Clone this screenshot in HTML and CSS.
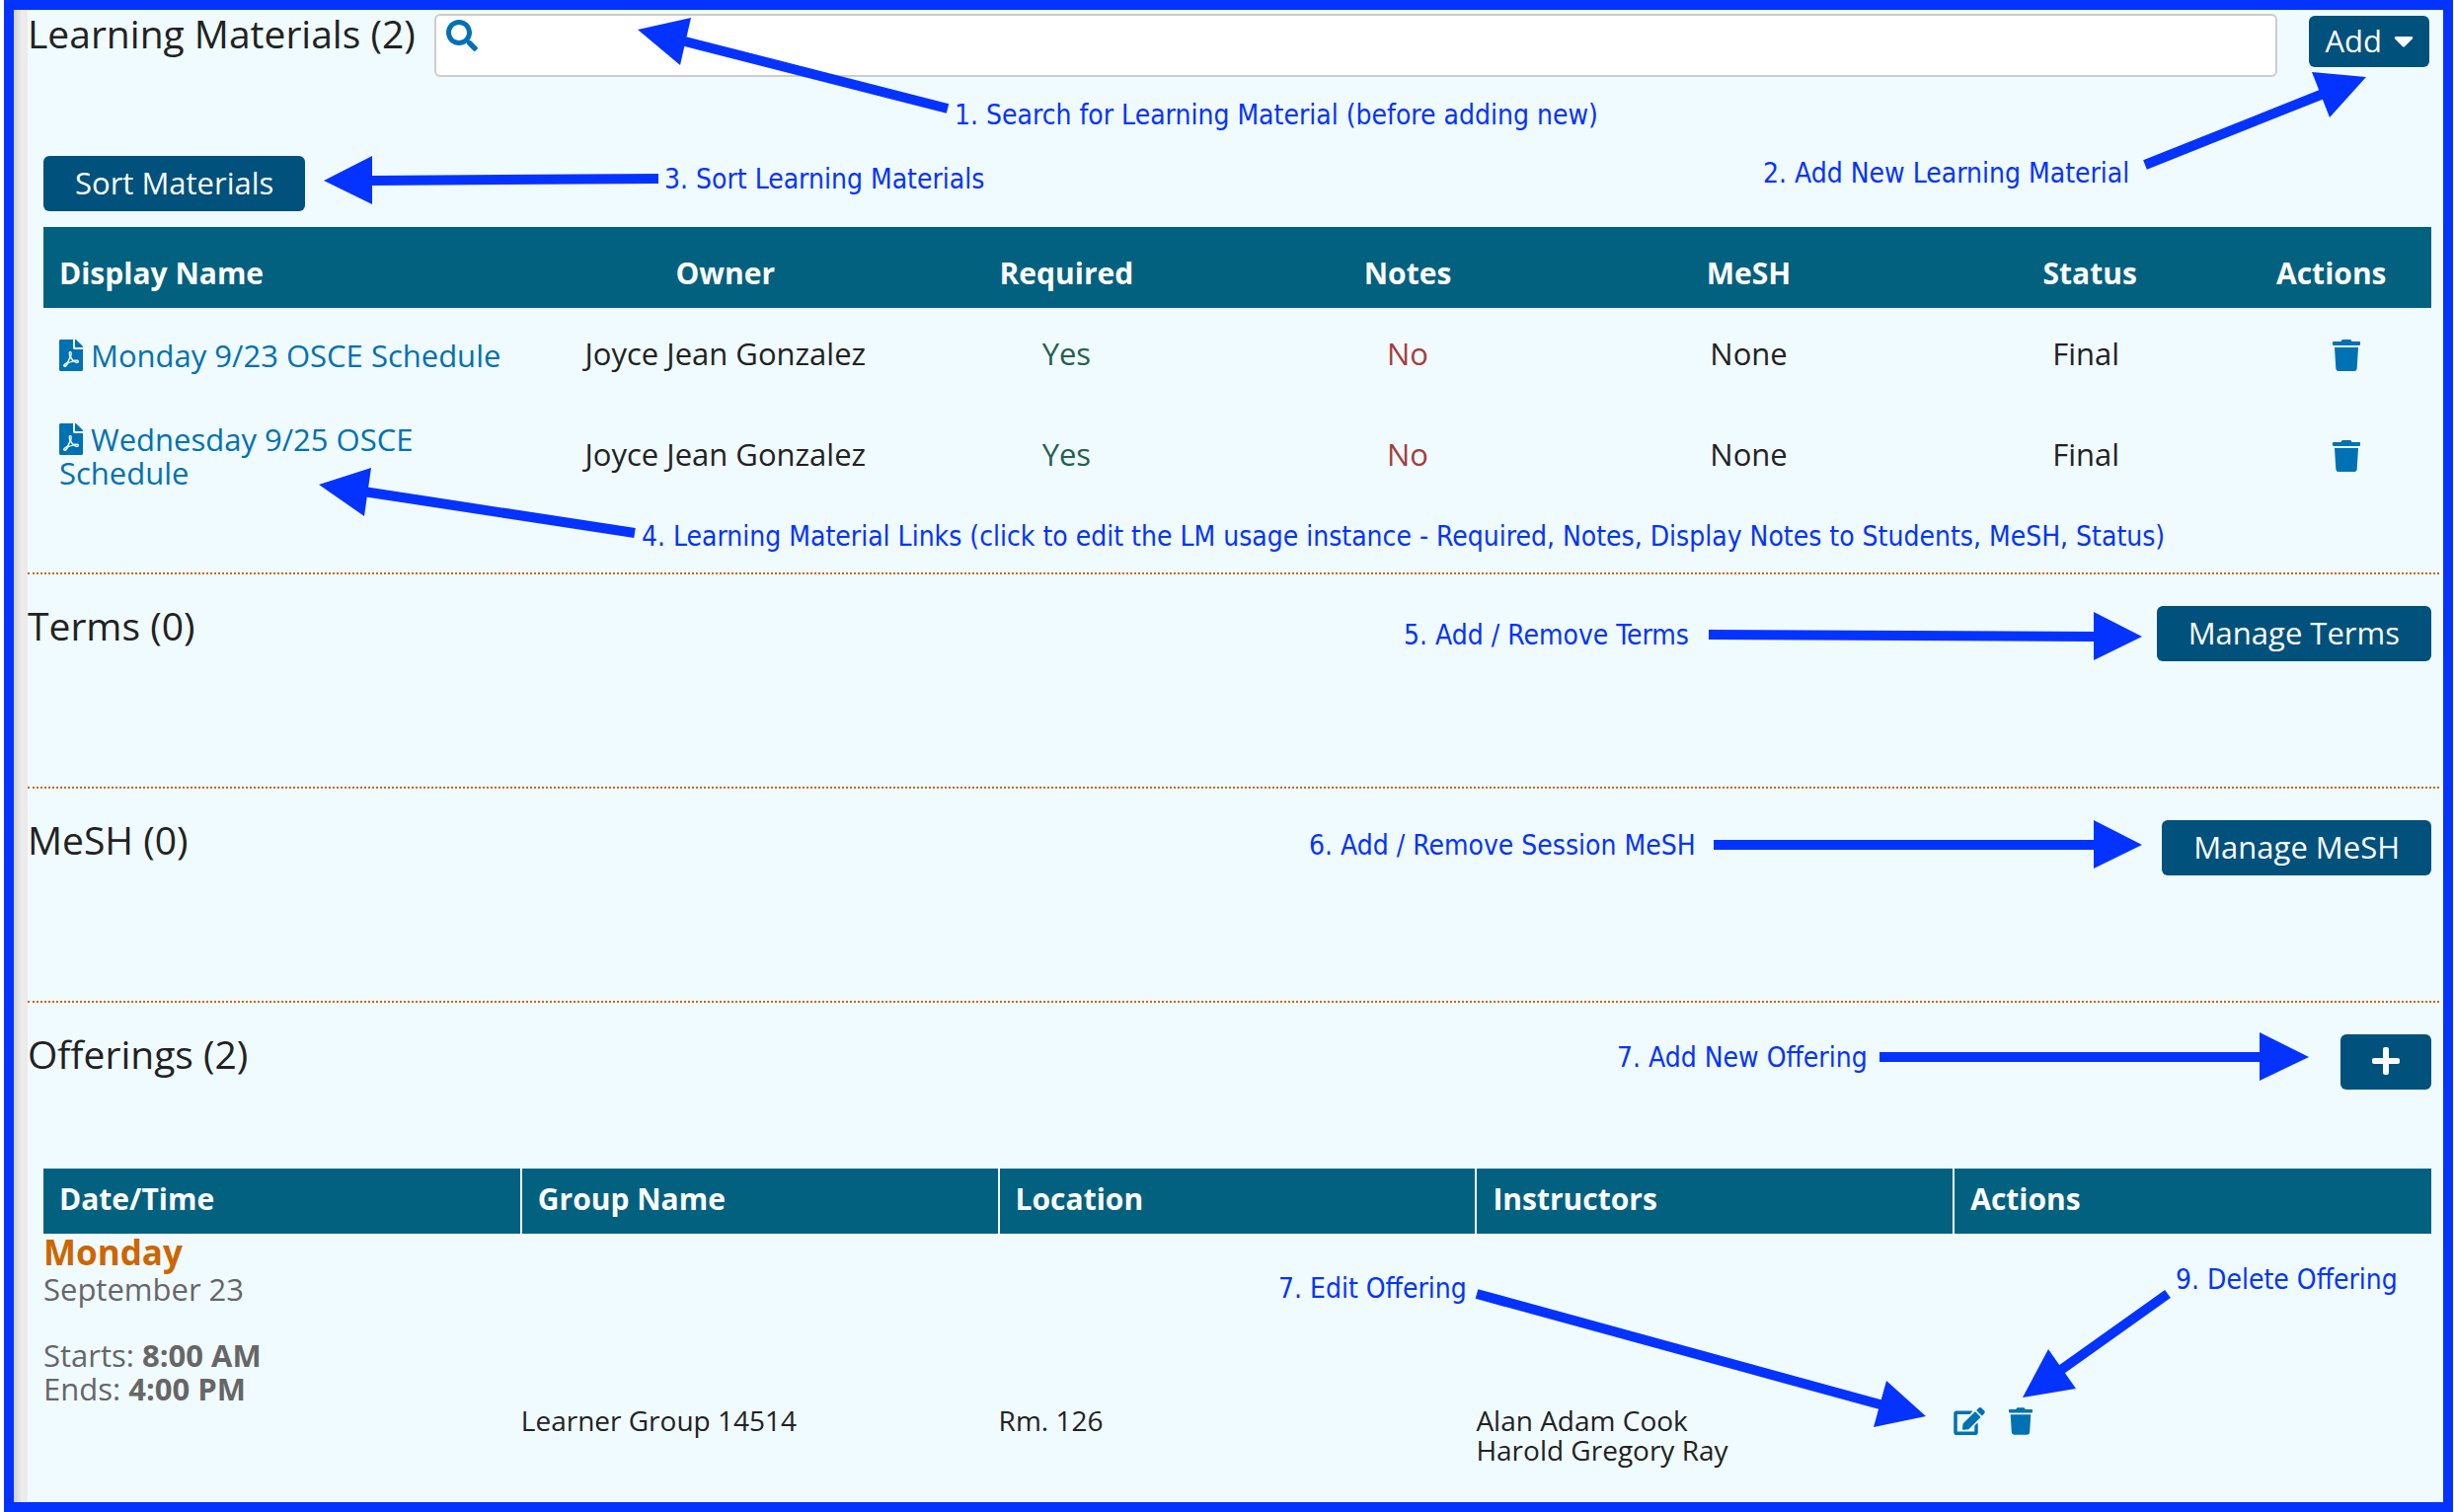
FILE: index.html
```html
<!DOCTYPE html>
<html lang="en">
<head>
<meta charset="utf-8">
<title>Session Details</title>
<link rel="stylesheet" href="styles.css">
</head>
<body>
<svg class="sprite" aria-hidden="true">
  <symbol id="i-search" viewBox="0 0 512 512"><path d="M505 442.7L405.3 343c-4.5-4.5-10.6-7-17-7H372c27.6-35.3 44-79.7 44-128C416 93.1 322.9 0 208 0S0 93.1 0 208s93.1 208 208 208c48.3 0 92.7-16.4 128-44v16.3c0 6.4 2.5 12.5 7 17l99.7 99.7c9.4 9.4 24.6 9.4 33.9 0l28.3-28.3c9.4-9.4 9.4-24.6.1-34zM208 336c-70.7 0-128-57.2-128-128 0-70.7 57.2-128 128-128 70.7 0 128 57.2 128 128 0 70.7-57.2 128-128 128z"/></symbol>
  <symbol id="i-trash" viewBox="0 0 448 512"><path d="M432 32H312l-9.4-18.7A24 24 0 0 0 281.1 0H166.8a23.72 23.72 0 0 0-21.4 13.3L136 32H16A16 16 0 0 0 0 48v32a16 16 0 0 0 16 16h416a16 16 0 0 0 16-16V48a16 16 0 0 0-16-16zM32 128l21.2 339a48 48 0 0 0 47.9 45h245.8a48 48 0 0 0 47.9-45L416 128z"/></symbol>
  <symbol id="i-edit" viewBox="0 0 576 512"><path d="M402.6 83.2l90.2 90.2c3.8 3.8 3.8 10 0 13.8L274.4 405.6l-92.8 10.3c-12.4 1.4-22.9-9.1-21.5-21.5l10.3-92.8L388.8 83.2c3.8-3.8 10-3.8 13.8 0zm162-22.9l-48.8-48.8c-15.2-15.2-39.9-15.2-55.2 0l-35.4 35.4c-3.8 3.8-3.8 10 0 13.8l90.2 90.2c3.8 3.8 10 3.8 13.8 0l35.4-35.4c15.2-15.3 15.2-40 0-55.2zM384 346.2V448H64V128h229.8c3.2 0 6.2-1.3 8.5-3.5l40-40c7.6-7.6 2.2-20.5-8.5-20.5H48C21.5 64 0 85.5 0 112v352c0 26.5 21.5 48 48 48h352c26.5 0 48-21.5 48-48V306.2c0-10.7-12.9-16-20.5-8.5l-40 40c-2.2 2.3-3.5 5.3-3.5 8.5z"/></symbol>
  <symbol id="i-pdf" viewBox="0 0 384 512"><path d="M181.9 256.1c-5-16-4.9-46.9-2-46.9 8.4 0 7.6 36.9 2 46.9zm-1.7 47.2c-7.7 20.2-17.3 43.3-28.4 62.7 18.3-7 39-17.2 62.9-21.9-12.7-9.6-24.9-23.4-34.5-40.8zM86.1 428.1c0 .8 13.2-5.4 34.9-40.2-6.7 6.3-29.1 24.5-34.9 40.2zM248 160h136v328c0 13.3-10.7 24-24 24H24c-13.3 0-24-10.7-24-24V24C0 10.7 10.7 0 24 0h200v136c0 13.2 10.8 24 24 24zm-8 171.8c-20-12.2-33.3-29-42.7-53.8 4.5-18.5 11.6-46.6 6.2-64.2-4.7-29.4-42.4-26.5-47.8-6.8-5 18.3-.4 44.1 8.1 77-11.6 27.6-28.7 64.6-40.8 85.8-.1 0-.1.1-.2.1-27.1 13.9-73.6 44.5-54.5 68 5.6 6.9 16 10 21.5 10 17.9 0 35.7-18 61.1-61.8 25.8-8.5 54.1-19.1 79-23.2 21.7 11.8 47.1 19.5 64 19.5 29.2 0 31.2-32 19.7-43.4-13.9-13.6-54.3-9.7-73.6-7.2zM377 105L279 7c-4.5-4.5-10.6-7-17-7h-6v128h128v-6.1c0-6.3-2.5-12.4-7-16.9zm-74.1 255.3c4.1-2.7-2.5-11.9-42.8-9 37.1 15.8 42.8 9 42.8 9z"/></symbol>
  <symbol id="i-plus" viewBox="0 0 448 512"><path d="M416 208H272V64c0-17.67-14.33-32-32-32h-32c-17.67 0-32 14.33-32 32v144H32c-17.67 0-32 14.33-32 32v32c0 17.67 14.33 32 32 32h144v144c0 17.67 14.33 32 32 32h32c17.67 0 32-14.33 32-32V304h144c17.67 0 32-14.33 32-32v-32c0-17.67-14.33-32-32-32z"/></symbol>
  <symbol id="i-caret" viewBox="0 0 320 512"><path d="M31.3 192h257.3c17.8 0 26.7 21.5 14.1 34.1L174.1 354.7c-7.8 7.8-20.5 7.8-28.3 0L17.2 226.1C4.6 213.5 13.5 192 31.3 192z"/></symbol>
</svg>

<main class="frame">
  <section class="materials">
    <div class="search-row">
      <h2 class="title"><label for="search">Learning Materials (2)</label></h2>
      <div class="search">
        <svg class="search-icon"><use href="#i-search"/></svg>
        <input class="search-input" id="search" type="search">
      </div>
      <button class="btn btn-add" type="button">Add <svg class="caret"><use href="#i-caret"/></svg></button>
    </div>
    <div class="materials-body">
      <button class="btn" type="button">Sort Materials</button>
      <table class="table materials-table">
        <thead>
          <tr>
            <th class="col-name">Display Name</th>
            <th class="col-mid">Owner</th>
            <th class="col-mid">Required</th>
            <th class="col-mid">Notes</th>
            <th class="col-mid">MeSH</th>
            <th class="col-mid">Status</th>
            <th class="col-actions">Actions</th>
          </tr>
        </thead>
        <tbody>
          <tr>
            <td class="col-name"><a class="link" href="#monday"><svg class="pdf"><use href="#i-pdf"/></svg> Monday 9/23 OSCE Schedule</a></td>
            <td>Joyce Jean Gonzalez</td>
            <td class="yes">Yes</td>
            <td class="no">No</td>
            <td>None</td>
            <td class="status">Final</td>
            <td><button class="icon-btn" type="button" aria-label="Remove"><svg class="trash"><use href="#i-trash"/></svg></button></td>
          </tr>
          <tr>
            <td class="col-name"><a class="link" href="#wednesday"><svg class="pdf"><use href="#i-pdf"/></svg> Wednesday 9/25 OSCE Schedule</a></td>
            <td>Joyce Jean Gonzalez</td>
            <td class="yes">Yes</td>
            <td class="no">No</td>
            <td>None</td>
            <td class="status">Final</td>
            <td><button class="icon-btn" type="button" aria-label="Remove"><svg class="trash"><use href="#i-trash"/></svg></button></td>
          </tr>
        </tbody>
      </table>
    </div>
  </section>

  <section class="section">
    <div class="section-head">
      <h2 class="title">Terms (0)</h2>
      <button class="btn" type="button">Manage Terms</button>
    </div>
  </section>

  <section class="section">
    <div class="section-head">
      <h2 class="title">MeSH (0)</h2>
      <button class="btn" type="button">Manage MeSH</button>
    </div>
  </section>

  <section class="section offerings">
    <div class="section-head">
      <h2 class="title">Offerings (2)</h2>
      <button class="btn" type="button" aria-label="Add offering"><svg class="plus"><use href="#i-plus"/></svg></button>
    </div>
    <table class="table offerings-table">
      <thead>
        <tr>
          <th>Date/Time</th>
          <th>Group Name</th>
          <th>Location</th>
          <th>Instructors</th>
          <th>Actions</th>
        </tr>
      </thead>
      <tbody>
        <tr>
          <td class="when" colspan="5">
            <div class="weekday">Monday</div>
            <div class="date">September 23</div>
            <div class="time">Starts: <b>8:00 AM</b></div>
            <div class="time">Ends: <b>4:00 PM</b></div>
          </td>
        </tr>
        <tr class="offering">
          <td></td>
          <td>Learner Group 14514</td>
          <td>Rm. 126</td>
          <td>Alan Adam Cook<br>Harold Gregory Ray</td>
          <td>
            <div class="actions">
              <button class="icon-btn" type="button" aria-label="Edit offering"><svg class="edit-small"><use href="#i-edit"/></svg></button>
              <button class="icon-btn" type="button" aria-label="Delete offering"><svg class="trash-small"><use href="#i-trash"/></svg></button>
            </div>
          </td>
        </tr>
      </tbody>
    </table>
  </section>
</main>

<svg class="arrows" aria-hidden="true">
  <g class="shafts">
    <path d="M960 110L690 41"/>
    <path d="M2173 167L2356 94"/>
    <path d="M667 181L375 183"/>
    <path d="M643 540L368 498"/>
    <path d="M1731 643L2123 645"/>
    <path d="M1736 856L2123 856"/>
    <path d="M1904 1071L2291 1071"/>
    <path d="M1496 1311L1908 1424"/>
    <path d="M2196 1311L2085 1390"/>
  </g>
  <g class="heads">
    <path d="M646 30L700 18L689 66z"/>
    <path d="M2397 78L2342 73L2360 119z"/>
    <path d="M328 183L377 158V207z"/>
    <path d="M323 491L376 474L369 523z"/>
    <path d="M2170 645L2121 620V669z"/>
    <path d="M2170 856L2121 831V880z"/>
    <path d="M2339 1071L2289 1046V1095z"/>
    <path d="M1951 1435L1911 1399L1898 1446z"/>
    <path d="M2049 1416L2075 1367L2103 1407z"/>
  </g>
</svg>
<p class="note note-search">1. Search for Learning Material (before adding new)</p>
<p class="note note-add">2. Add New Learning Material</p>
<p class="note note-sort">3. Sort Learning Materials</p>
<p class="note note-links">4. Learning Material Links (click to edit the LM usage instance - Required, Notes, Display Notes to Students, MeSH, Status)</p>
<p class="note note-terms">5. Add / Remove Terms</p>
<p class="note note-mesh">6. Add / Remove Session MeSH</p>
<p class="note note-offering">7. Add New Offering</p>
<p class="note note-edit">7. Edit Offering</p>
<p class="note note-delete">9. Delete Offering</p>
</body>
</html>
```
FILE: styles.css
```css
* { box-sizing: border-box; }

body {
  position: relative;
  margin: 0;
  background: #fff;
  color: #222;
  font: 31px/34px "Open Sans", "Noto Sans", sans-serif;
}

button, input { font: inherit; }
svg { display: block; fill: currentColor; }
.sprite { display: none; }

.frame {
  margin: 0 1px 1px 4px;
  border: 10px solid #0433ff;
  padding: 4px 0 38px 14px;
  background:
    linear-gradient(to right, #cfcfcf, #f0f0f0 9px, #ebebeb 10px, #ebebeb 14px, transparent 14px),
    #f0fbff;
}

.title {
  margin: 0;
  font-size: 39px;
  font-weight: 400;
  line-height: 40px;
}

.btn {
  display: inline-flex;
  align-items: center;
  height: 56px;
  padding: 0 32px 2px;
  border: 0;
  border-radius: 6px;
  background: #00517b;
  color: #fff;
}
.icon-btn {
  display: block;
  padding: 0;
  border: 0;
  background: none;
  color: #0071b2;
}

.search-row {
  display: flex;
  align-items: flex-start;
  padding-right: 14px;
}
.search {
  display: flex;
  flex: 1;
  gap: 12px;
  height: 64px;
  margin: 0 32px 0 19px;
  padding: 4px 10px;
  border: 2px solid #ccc;
  border-radius: 6px;
  background: #fff;
}
.search-icon { width: 32px; height: 32px; color: #0071b2; }
.search-input { flex: 1; border: 0; outline: 0; background: none; }
.btn-add { gap: 12px; height: 52px; margin-top: 2px; padding: 0 16px 2px; }
.caret { width: 20px; height: 32px; }

.materials-body { padding: 80px 12px 64px 16px; }

.table {
  width: 100%;
  border-collapse: collapse;
  table-layout: fixed;
}
.table th {
  background: #036180;
  color: #fff;
  font-size: 30px;
  font-weight: 700;
}
.table td { padding: 0; }

.materials-table { margin-top: 16px; text-align: center; }
.materials-table th { height: 82px; padding: 12px 16px 0; }
.materials-table td { height: 96px; padding: 18px 16px 22px; }
.materials-table td.col-name { padding: 20px 16px; }
.materials-table td.status { padding-right: 24px; }
.materials-table .col-name { width: 518px; text-align: left; }
.materials-table .col-actions { width: 173px; text-align: left; }
.materials-table .icon-btn { margin: 4px auto 0; }
.link { color: #0071b2; text-decoration: none; }
.pdf { display: inline-block; width: 24px; height: 32px; vertical-align: -4px; }
.trash { width: 28px; height: 32px; }
.yes { color: #25604f; }
.no { color: #a83c3c; }

.section {
  padding: 32px 0 127px;
  border-top: 2px dotted #cc6600;
  margin-right: 4px;
}
.section-head {
  display: flex;
  align-items: flex-start;
  justify-content: space-between;
  padding-right: 8px;
}
.plus { width: 28px; height: 32px; }

.offerings { padding-bottom: 0; }
.offerings-table { width: calc(100% - 24px); margin: 80px 0 0 16px; }
.offerings-table th {
  height: 66px;
  padding: 0 16px 4px;
  border-left: 2px solid #f0fbff;
  text-align: left;
}
.offerings-table th:first-child { border-left: 0; }
.weekday { color: #cc6600; font-size: 35px; font-weight: 700; line-height: 38px; }
.date { margin-bottom: 32px; color: #666; line-height: 36px; }
.time { color: #666; }
.offering { font-size: 28px; line-height: 30px; vertical-align: top; }
.actions { display: flex; gap: 24px; padding-top: 2px; }
.edit-small { width: 32px; height: 28px; }
.trash-small { width: 24px; height: 28px; }

/* Call-outs drawn over the page */
.arrows {
  position: absolute;
  top: 0;
  left: 0;
  width: 100%;
  height: 100%;
  pointer-events: none;
}
.shafts { stroke: #0433ff; stroke-width: 10px; }
.heads { fill: #0433ff; }
.note {
  position: absolute;
  margin: 0;
  color: #0433ff;
  font: 28px/34px "DejaVu Sans Condensed", "Noto Sans", sans-serif;
  white-space: nowrap;
}
.note-search { top: 100px; left: 967px; }
.note-add { top: 159px; left: 1786px; }
.note-sort { top: 165px; left: 673px; }
.note-links { top: 527px; left: 650px; }
.note-terms { top: 627px; left: 1422px; }
.note-mesh { top: 840px; left: 1326px; }
.note-offering { top: 1055px; left: 1638px; }
.note-edit { top: 1289px; left: 1295px; }
.note-delete { top: 1280px; left: 2204px; }
```
